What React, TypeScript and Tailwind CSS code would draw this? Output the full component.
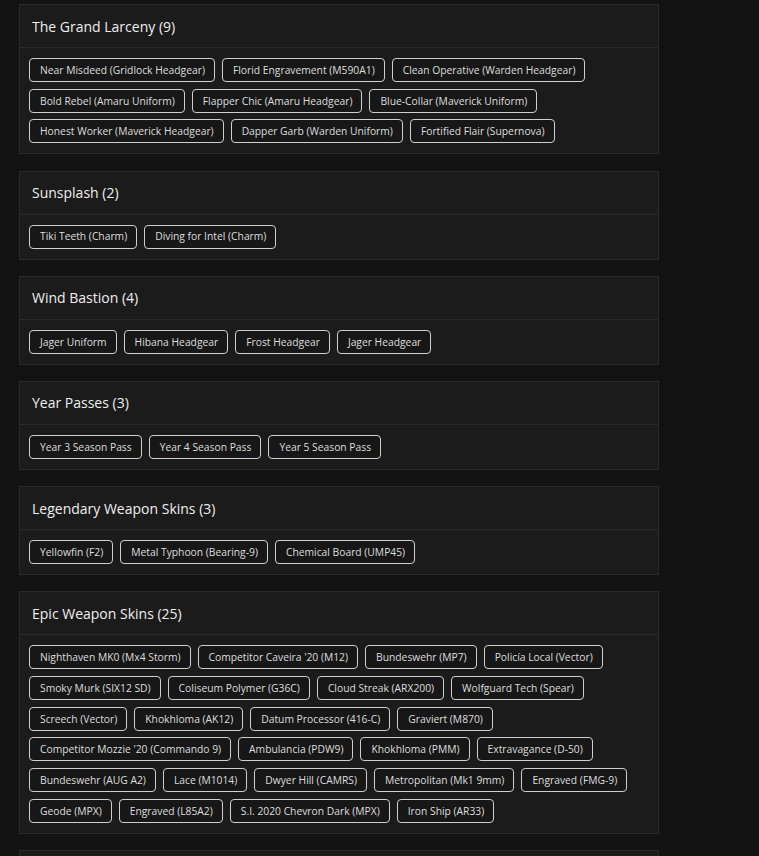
import React from "react";

const sections: { title: string; items: string[] }[] = [
  {
    title: "The Grand Larceny (9)",
    items: [
      "Near Misdeed (Gridlock Headgear)",
      "Florid Engravement (M590A1)",
      "Clean Operative (Warden Headgear)",
      "Bold Rebel (Amaru Uniform)",
      "Flapper Chic (Amaru Headgear)",
      "Blue-Collar (Maverick Uniform)",
      "Honest Worker (Maverick Headgear)",
      "Dapper Garb (Warden Uniform)",
      "Fortified Flair (Supernova)",
    ],
  },
  { title: "Sunsplash (2)", items: ["Tiki Teeth (Charm)", "Diving for Intel (Charm)"] },
  {
    title: "Wind Bastion (4)",
    items: ["Jager Uniform", "Hibana Headgear", "Frost Headgear", "Jager Headgear"],
  },
  {
    title: "Year Passes (3)",
    items: ["Year 3 Season Pass", "Year 4 Season Pass", "Year 5 Season Pass"],
  },
  {
    title: "Legendary Weapon Skins (3)",
    items: ["Yellowfin (F2)", "Metal Typhoon (Bearing-9)", "Chemical Board (UMP45)"],
  },
  {
    title: "Epic Weapon Skins (25)",
    items: [
      "Nighthaven MK0 (Mx4 Storm)",
      "Competitor Caveira '20 (M12)",
      "Bundeswehr (MP7)",
      "Policía Local (Vector)",
      "Smoky Murk (SIX12 SD)",
      "Coliseum Polymer (G36C)",
      "Cloud Streak (ARX200)",
      "Wolfguard Tech (Spear)",
      "Screech (Vector)",
      "Khokhloma (AK12)",
      "Datum Processor (416-C)",
      "Graviert (M870)",
      "Competitor Mozzie '20 (Commando 9)",
      "Ambulancia (PDW9)",
      "Khokhloma (PMM)",
      "Extravagance (D-50)",
      "Bundeswehr (AUG A2)",
      "Lace (M1014)",
      "Dwyer Hill (CAMRS)",
      "Metropolitan (Mk1 9mm)",
      "Engraved (FMG-9)",
      "Geode (MPX)",
      "Engraved (L85A2)",
      "S.I. 2020 Chevron Dark (MPX)",
      "Iron Ship (AR33)",
    ],
  },
  {
    title: "Rare Weapon Skins (12)",
    items: ["Placeholder"],
  },
];

function Card({ title, items }: { title: string; items: string[] }) {
  return (
    <div className="w-[640px] shrink-0 bg-[#1b1b1b] border border-[#2a2a2a]">
      <div className="h-[43px] flex items-center pl-[12px] pt-[1px] border-b border-[#2a2a2a]">
        <span className="text-[14px] font-medium text-[#efefef] leading-none">{title}</span>
      </div>
      <div className="px-[9px] pt-[10px] pb-[10px] flex flex-wrap gap-x-[7px] gap-y-[6.7px]">
        {items.map((it) => (
          <div
            key={it}
            className="h-[24px] flex items-center pl-[10px] pr-[9px] border border-[#cfcfcf] rounded-[4px] bg-[#171717] text-[10.3px] text-[#dedede] leading-none whitespace-nowrap"
          >
            {it}
          </div>
        ))}
      </div>
    </div>
  );
}

export default function App() {
  return (
    <div
      className="w-full bg-[#121212] pt-[4px] pl-[19px] flex flex-col gap-[16.2px] overflow-hidden h-[856px]"
      style={{ fontFamily: "'Open Sans', 'Noto Sans', sans-serif" }}
    >
      {sections.map((s) => (
        <Card key={s.title} title={s.title} items={s.items} />
      ))}
    </div>
  );
}
